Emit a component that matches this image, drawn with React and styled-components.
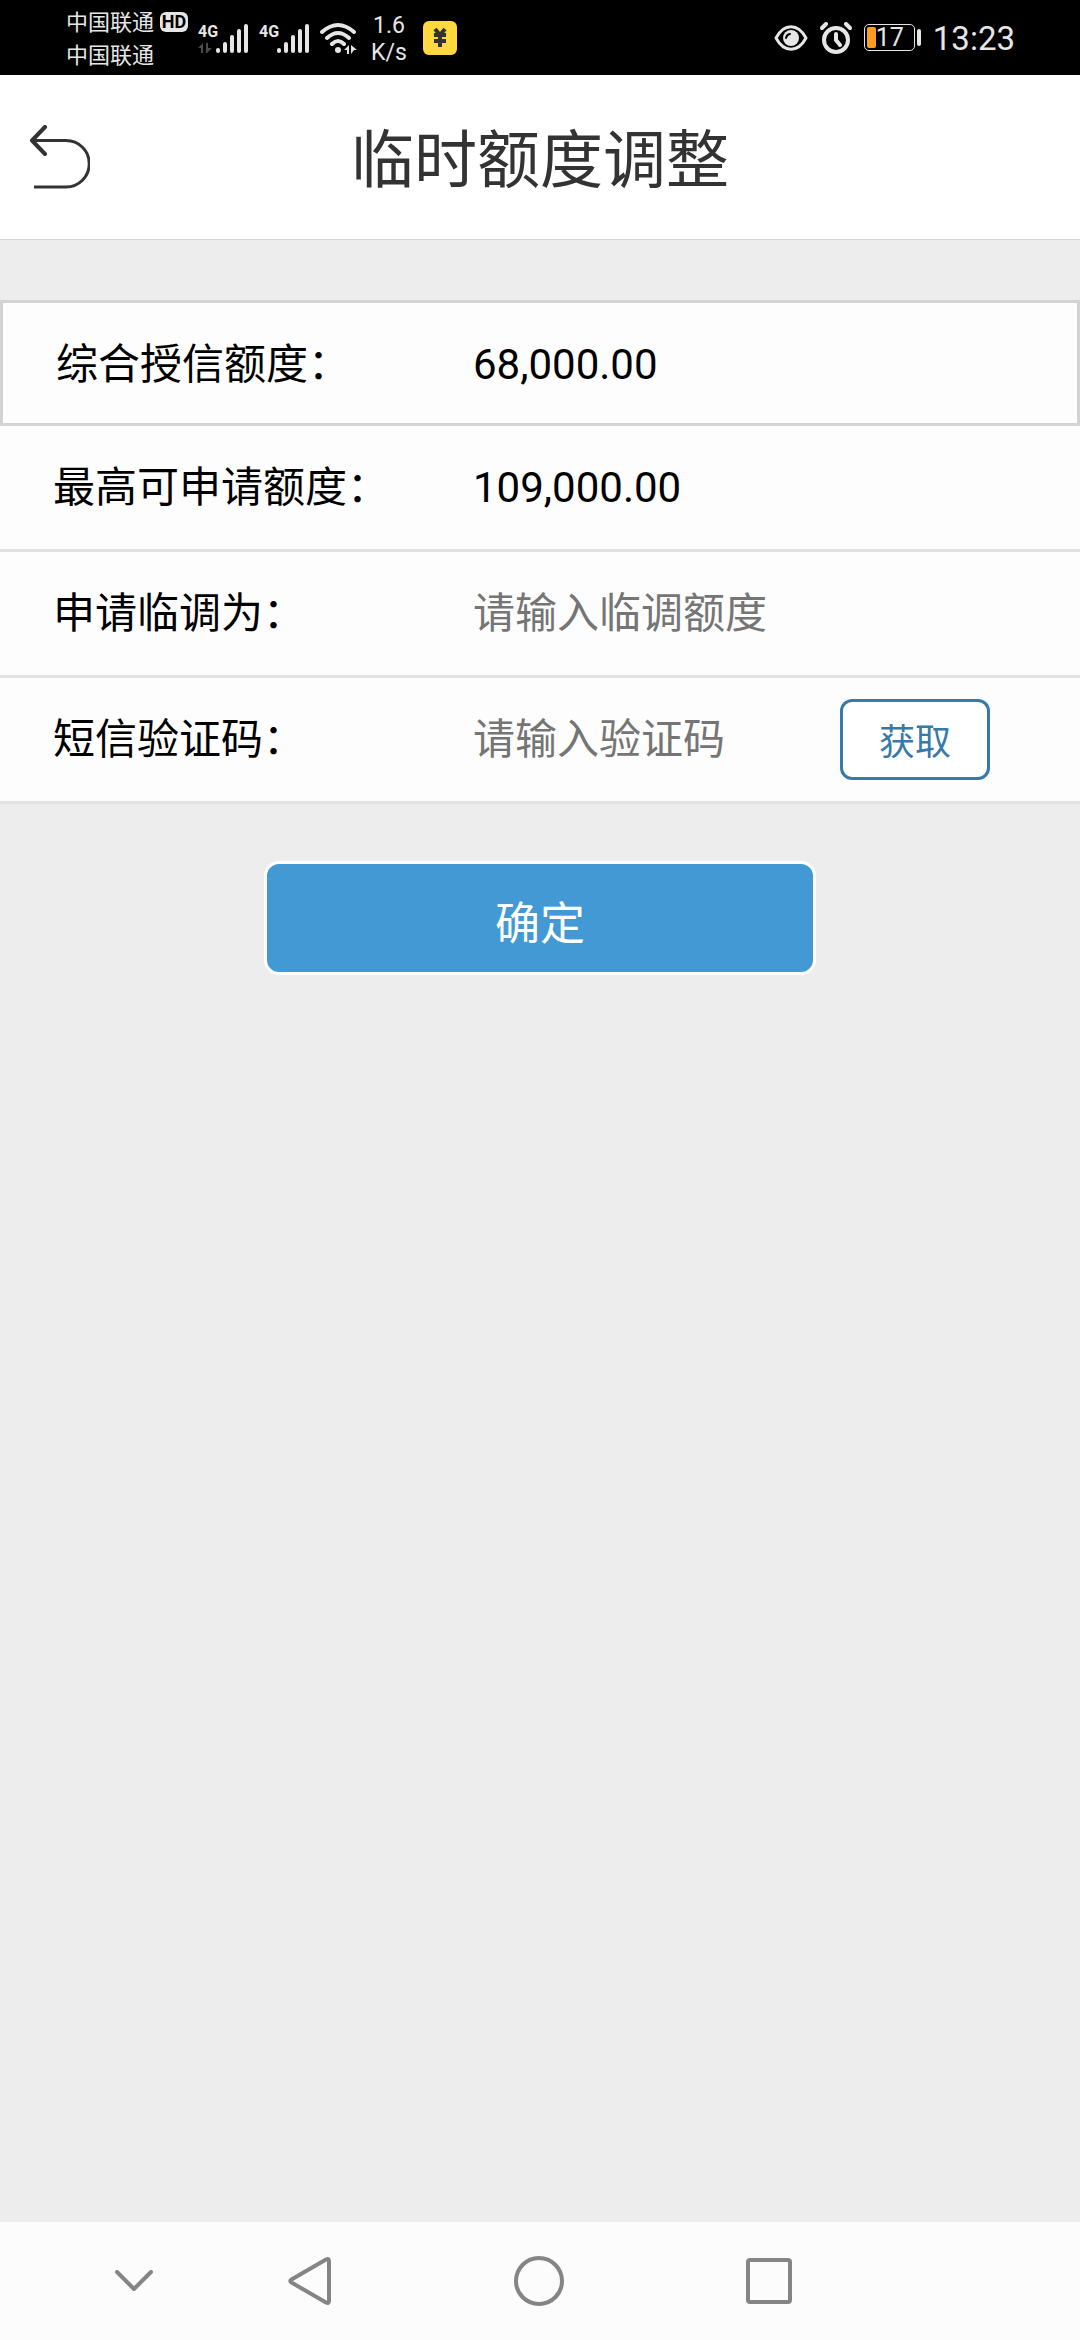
import { useState } from "react";
import styled, { createGlobalStyle } from "styled-components";

const GlobalStyle = createGlobalStyle`
	* {
		box-sizing: border-box;
	}
	body {
		margin: 0;
		background-color: #ededed;
		font-family: Roboto, "Noto Sans CJK SC", sans-serif;
		color: #000;
	}
	button,
	input {
		font-family: inherit;
		margin: 0;
		padding: 0;
	}
	svg {
		display: block;
		flex-shrink: 0;
	}
`;
const Page = styled.div`
	min-height: 100vh;
	display: flex;
	flex-direction: column;
`;
const StatusBar = styled.div`
	display: flex;
	justify-content: space-between;
	height: 75px;
	padding: 0 65px 0 66px;
	background-color: #000;
	color: #e6e6e6;
`;
const StatusGroup = styled.div`
	display: flex;
	align-items: center;
	gap: ${(props) => props.$gap};
`;
const Carriers = styled.div`
	display: grid;
	grid-template-columns: auto auto;
	column-gap: 6px;
	align-items: center;
	padding-top: 2px;
	font-size: 22px;
	line-height: 33px;
`;
const HdBadge = styled.span`
	width: 28px;
	height: 20px;
	border-radius: 6px;
	background-color: #e6e6e6;
	color: #000;
	font-size: 18px;
	font-weight: 700;
	line-height: 20px;
	text-align: center;
`;
const NetSpeed = styled.div`
	display: flex;
	flex-direction: column;
	align-items: center;
	margin: 0 6px 0 4px;
	padding-top: 2px;
	font-size: 23px;
	line-height: 27px;
`;
const Battery = styled.div`
	display: flex;
	align-items: center;
	gap: 2px;
	&::after {
		content: "";
		width: 4px;
		height: 17px;
		border-radius: 2px;
		background-color: #e6e6e6;
	}
`;
const BatteryBody = styled.div`
	display: flex;
	align-items: center;
	width: 51px;
	height: 27px;
	padding: 2px;
	border: 1px solid #e6e6e6;
	border-radius: 5px;
	font-size: 25px;
	line-height: 21px;
	&::before {
		content: "";
		width: 9px;
		height: 21px;
		border-radius: 2px;
		background-color: #ff9d1e;
	}
`;
const Clock = styled.span`
	padding-top: 2px;
	font-size: 33px;
	line-height: 40px;
`;
const Header = styled.header`
	display: grid;
	grid-template-columns: 1fr auto 1fr;
	align-items: center;
	height: 165px;
	padding: 0 30px;
	background-color: #fff;
	border-bottom: 1px solid #d3d3d3;
	h1 {
		margin: 0;
		padding-top: 8px;
		font-size: 63px;
		font-weight: 400;
		line-height: 90px;
		color: #333;
	}
`;
const IconButton = styled.button`
	display: flex;
	align-items: center;
	justify-content: ${(props) => props.$justify || "center"};
	border: none;
	background: none;
	cursor: pointer;
`;
const Form = styled.form`
	flex: 1;
	display: flex;
	flex-direction: column;
	padding-top: 60px;
`;
const Row = styled.div`
	display: flex;
	align-items: center;
	height: 126px;
	padding: 0 90px 0 53px;
	background-color: #fdfdfd;
	border-bottom: 3px solid #e3e3e3;
	font-size: 42px;
	line-height: 60px;
	& > :first-child {
		flex: 0 0 420px;
	}
`;
const OutlinedRow = styled(Row)`
	padding-top: 3px;
	border: 3px solid #d3d3d3;
	& > :first-child {
		flex-basis: 417px;
	}
`;
const TextInput = styled.input`
	flex: 1;
	min-width: 0;
	height: 60px;
	border: none;
	outline: none;
	background: none;
	font-size: 42px;
	color: #000;
	&::placeholder {
		color: #757575;
		opacity: 1;
	}
`;
const CodeButton = styled.button`
	width: 150px;
	height: 81px;
	padding-bottom: 2px;
	border: 3px solid #3779a8;
	border-radius: 12px;
	background-color: #fff;
	color: #3779a8;
	font-size: 36px;
	cursor: pointer;
`;
const SubmitButton = styled.button`
	align-self: center;
	width: 552px;
	max-width: 90%;
	height: 114px;
	margin-top: 57px;
	padding-top: 5px;
	border: 3px solid #fff;
	border-radius: 15px;
	background-color: #4299d4;
	color: #fff;
	font-size: 45px;
	cursor: pointer;
`;
const NavBar = styled.nav`
	display: grid;
	grid-template-columns: 15% 1fr 1fr 1fr;
	height: 118px;
	padding: 0 196px 0 73px;
	background-color: #fcfcfc;
`;

function Signal({ arrows }) {
	return (
		<svg width="51" height="32" viewBox="0 0 51 32" fill="#e6e6e6">
			<text x="0" y="15" fontSize="16" fontWeight="700" fontFamily="Roboto, sans-serif">
				4G
			</text>
			{arrows && <path d="M0 26l5-5v10H3v-5zM8 21h2v5h4l-5 5H8z" fill="#4a4a4a" />}
			<path d="M20 28v1M27 22v7M34 15v14M41 9v20M48 4v25" stroke="#e6e6e6" strokeWidth="4" strokeLinecap="round" />
		</svg>
	);
}

function Wifi() {
	return (
		<svg width="37" height="32" viewBox="0 0 37 32" fill="none" stroke="#e6e6e6" strokeWidth="4" strokeLinecap="round">
			<path d="M2 10Q18 -4 34 10M7 16Q18 6 29 16M12 22Q18 16 24 22" />
			<circle cx="18" cy="28" r="3" fill="#e6e6e6" stroke="none" />
			<path d="M24 28l5-5v9h-2v-4zM31 23l6 5h-3l-3 4z" fill="#e6e6e6" stroke="none" />
		</svg>
	);
}

function YuanBadge() {
	return (
		<svg width="34" height="34" viewBox="0 0 34 34">
			<rect width="34" height="34" rx="6" fill="#ffd93d" />
			<path d="M12 8l5 6 5-6M11 14h12M11 20h12M17 14v12" fill="none" stroke="#333" strokeWidth="4" />
		</svg>
	);
}

function Eye() {
	return (
		<svg width="34" height="28" viewBox="0 0 34 28" fill="none" stroke="#e6e6e6">
			<path d="M2 14C10 -1 24 -1 32 14C24 29 10 29 2 14Z" strokeWidth="3" strokeLinejoin="round" />
			<circle cx="17" cy="14" r="8" fill="#e6e6e6" stroke="none" />
			<path d="M12 14a5 5 0 0 1 4-4" stroke="#000" strokeWidth="2" strokeLinecap="round" />
		</svg>
	);
}

function Alarm() {
	return (
		<svg width="32" height="32" viewBox="0 0 32 32" fill="none" stroke="#e6e6e6" strokeWidth="4" strokeLinecap="round">
			<circle cx="16" cy="18" r="12" />
			<path d="M16 12v6l4 5M2 6l4-4M30 6l-4-4" />
		</svg>
	);
}

function App() {
	const [amount, setAmount] = useState("");
	const [code, setCode] = useState("");

	function onSubmit(e) {
		e.preventDefault();
	}

	return (
		<Page lang="zh-CN">
			<GlobalStyle />
			<StatusBar>
				<StatusGroup $gap="10px">
					<Carriers>
						<span>中国联通</span>
						<HdBadge>HD</HdBadge>
						<span>中国联通</span>
					</Carriers>
					<Signal arrows />
					<Signal />
					<Wifi />
					<NetSpeed>
						<span>1.6</span>
						<span>K/s</span>
					</NetSpeed>
					<YuanBadge />
				</StatusGroup>
				<StatusGroup $gap="12px">
					<Eye />
					<Alarm />
					<Battery>
						<BatteryBody>17</BatteryBody>
					</Battery>
					<Clock>13:23</Clock>
				</StatusGroup>
			</StatusBar>

			<Header>
				<IconButton type="button" aria-label="返回" $justify="flex-start">
					<svg width="60" height="64" viewBox="0 0 60 64" fill="none" stroke="#333" strokeWidth="3">
						<path d="M2 15.500H36A23.250 23.250 0 0 1 36 62H4" />
						<path d="M15 2L2 15.500L15 29" strokeWidth="4" strokeLinecap="round" strokeLinejoin="round" />
					</svg>
				</IconButton>
				<h1>临时额度调整</h1>
			</Header>

			<Form onSubmit={onSubmit}>
				<OutlinedRow>
					<span>综合授信额度：</span>
					<span>68,000.00</span>
				</OutlinedRow>
				<Row>
					<span>最高可申请额度：</span>
					<span>109,000.00</span>
				</Row>
				<Row>
					<label htmlFor="amount">申请临调为：</label>
					<TextInput type="text" id="amount" placeholder="请输入临调额度" value={amount} onChange={(e) => setAmount(e.target.value)} />
				</Row>
				<Row>
					<label htmlFor="code">短信验证码：</label>
					<TextInput type="text" id="code" placeholder="请输入验证码" value={code} onChange={(e) => setCode(e.target.value)} />
					<CodeButton type="button">获取</CodeButton>
				</Row>
				<SubmitButton type="submit">确定</SubmitButton>
			</Form>

			<NavBar>
				<IconButton type="button" aria-label="收起">
					<svg width="38" height="22" viewBox="0 0 38 22" fill="none" stroke="#858585" strokeWidth="4" strokeLinecap="round" strokeLinejoin="round">
						<path d="M2 2l17 17L36 2" />
					</svg>
				</IconButton>
				<IconButton type="button" aria-label="后退">
					<svg width="43" height="50" viewBox="0 0 43 50" fill="none" stroke="#858585" strokeWidth="4" strokeLinejoin="round">
						<path d="M38 3.500Q41 2 41 5V45Q41 48 38 46.500L3.500 26.500Q1 25 3.500 23.500Z" />
					</svg>
				</IconButton>
				<IconButton type="button" aria-label="主页">
					<svg width="50" height="50" viewBox="0 0 50 50" fill="none" stroke="#858585" strokeWidth="4">
						<circle cx="25" cy="25" r="23" />
					</svg>
				</IconButton>
				<IconButton type="button" aria-label="最近任务">
					<svg width="46" height="46" viewBox="0 0 46 46" fill="none" stroke="#858585" strokeWidth="4">
						<rect x="2" y="2" width="42" height="42" rx="2" />
					</svg>
				</IconButton>
			</NavBar>
		</Page>
	);
}

export default App;
